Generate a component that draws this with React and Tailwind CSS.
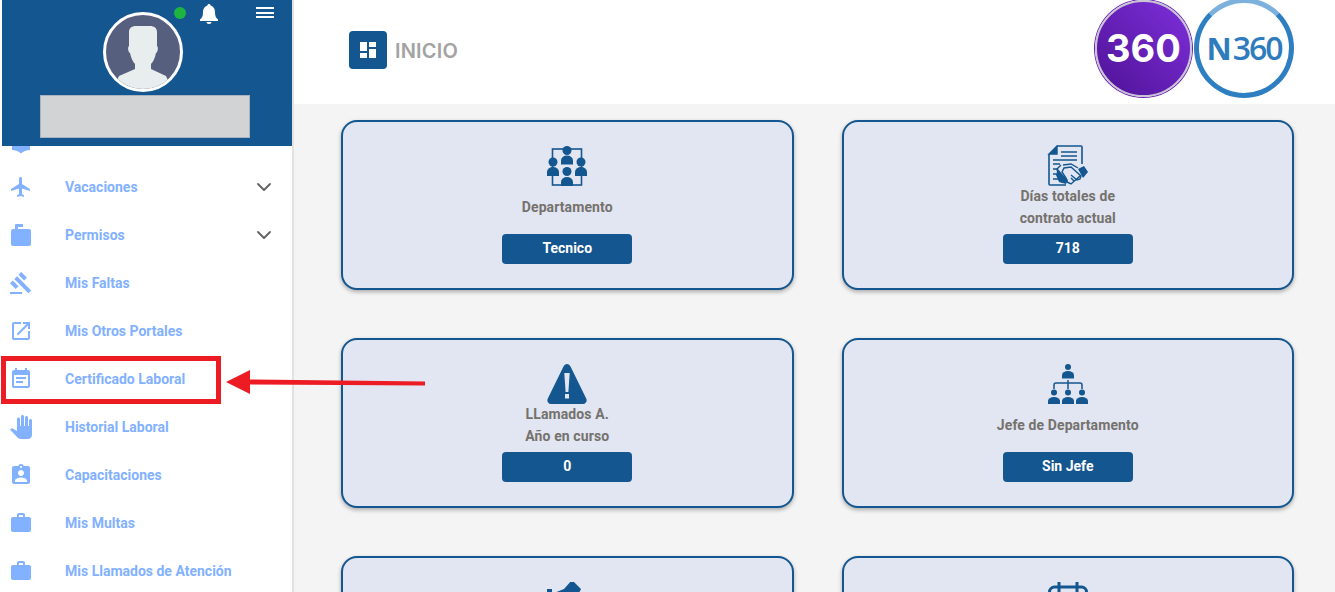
import { ChevronDown } from 'lucide-react';

const NAVY = '#14568f';

const MENU_PATHS = {
  library: 'M12 11.55C9.64 9.35 6.48 8 3 8v11c3.48 0 6.64 1.35 9 3.55 2.36-2.19 5.52-3.55 9-3.55V8c-3.48 0-6.64 1.35-9 3.55zM12 8c1.66 0 3-1.34 3-3s-1.34-3-3-3-3 1.34-3 3 1.34 3 3 3z',
  flight: 'M21 16v-2l-8-5V3.5c0-.83-.67-1.5-1.5-1.5S10 2.67 10 3.5V9l-8 5v2l8-2.5V19l-2 1.5V22l3.5-1 3.5 1v-1.5L13 19v-5.5l8 2.5z',
  permit: 'M20 6H9V4h5V1H7c-.6 0-1 .4-1 1v4H4c-1.100 0-2 .9-2 2v13c0 1.100.9 2 2 2h16c1.100 0 2-.9 2-2V8c0-1.100-.9-2-2-2z',
  gavel: 'M1 21h12v2H1zM5.245 8.07l2.83-2.827 14.14 14.142-2.828 2.828zM12.317 1l5.657 5.656-2.83 2.83-5.654-5.66zM3.825 9.485l5.657 5.657-2.828 2.828-5.657-5.657z',
  open: 'M19 19H5V5h7V3H5c-1.11 0-2 .9-2 2v14c0 1.1.89 2 2 2h14c1.1 0 2-.9 2-2v-7h-2v7zM14 3v2h3.59l-9.83 9.83 1.41 1.41L19 6.41V10h2V3h-7z',
  event: 'M17 10H7v2h10v-2zm2-7h-1V1h-2v2H8V1H6v2H5c-1.11 0-1.99.9-1.99 2L3 19c0 1.1.89 2 2 2h14c1.1 0 2-.9 2-2V5c0-1.1-.9-2-2-2zm0 16H5V8h14v11zm-5-5H7v2h7v-2z',
  hand: 'M23 5.5V20c0 2.2-1.8 4-4 4h-7.3c-1.08 0-2.1-.43-2.85-1.19L1 14.83s1.26-1.23 1.3-1.25c.22-.19.49-.29.79-.29.22 0 .42.06.6.16.04.01 4.31 2.46 4.31 2.46V4c0-.83.67-1.5 1.5-1.5S11 3.17 11 4v7h1V1.5c0-.83.67-1.5 1.5-1.5S15 .67 15 1.5V11h1V2.5c0-.83.67-1.5 1.5-1.5s1.5.67 1.5 1.5V11h1V5.5c0-.83.67-1.5 1.5-1.5s1.5.67 1.5 1.5z',
  badge: 'M19 3h-4.18C14.4 1.84 13.3 1 12 1c-1.3 0-2.4.84-2.82 2H5c-1.1 0-2 .9-2 2v14c0 1.1.9 2 2 2h14c1.1 0 2-.9 2-2V5c0-1.1-.9-2-2-2zm-7 0c.55 0 1 .45 1 1s-.45 1-1 1-1-.45-1-1 .45-1 1-1zm0 4c1.66 0 3 1.34 3 3s-1.34 3-3 3-3-1.34-3-3 1.34-3 3-3zm6 12H6v-1.4c0-2 4-3.1 6-3.1s6 1.1 6 3.1V19z',
  work: 'M20 6h-4V4c0-1.11-.89-2-2-2h-4c-1.11 0-2 .89-2 2v2H4c-1.11 0-1.99.89-1.99 2L2 19c0 1.11.89 2 2 2h16c1.11 0 2-.89 2-2V8c0-1.11-.89-2-2-2zm-6 0h-4V4h4v2z',
};

const MENU = [
  { icon: 'library', label: 'Mis Cursos', hidden: true },
  { icon: 'flight', label: 'Vacaciones', arrow: true },
  { icon: 'permit', label: 'Permisos', arrow: true },
  { icon: 'gavel', label: 'Mis Faltas' },
  { icon: 'open', label: 'Mis Otros Portales' },
  { icon: 'event', label: 'Certificado Laboral' },
  { icon: 'hand', label: 'Historial Laboral' },
  { icon: 'badge', label: 'Capacitaciones' },
  { icon: 'work', label: 'Mis Multas' },
  { icon: 'work', label: 'Mis Llamados de Atención' },
];

// head and shoulders, placed by the centre of the head
function Person({ x, y, r, top, h = 9 }) {
  return (
    <g>
      <circle cx={x} cy={y} r={r} />
      <path d={`M${x - 6} ${top + h}v-${h * 0.45}a6 ${h * 0.55} 0 0 1 12 0v${h * 0.45}z`} />
    </g>
  );
}

function TeamIcon() {
  return (
    <svg width="40" height="40" viewBox="0 0 40 40" fill={NAVY}>
      <rect x="5.5" y="3" width="29" height="36" fill="none" stroke={NAVY} strokeWidth="1.6" />
      <Person x={20} y={4.5} r={4.5} top={9.500} />
      <Person x={6} y={16} r={4.5} top={21} />
      <Person x={34} y={16} r={4.5} top={21} />
      <Person x={20} y={25.5} r={4.5} top={31} />
    </svg>
  );
}

function ContractIcon() {
  return (
    <svg width="42" height="42" viewBox="0 0 42 42" fill="none" stroke={NAVY} strokeWidth="1.4">
      <path d="M10 1h24a1 1 0 0 1 1 1v17M2 9v30a1 1 0 0 0 1 1h16" strokeWidth="1.6" />
      <path d="M10 1v8H2z" fill={NAVY} />
      <path d="M14 7h16M14 11h16M6 15h24M6 19h7M6 24h5M6 29h5M6 34h7" />
      <path d="M31 24l6-3 4 6-5 6z" fill={NAVY} stroke="none" />
      <path d="M14 20l-4 4 2 10c3 4 6 4 8 2l-1-3-4-6 2-4 7-1 10 9-1 3-3 1-6-5M20 37l4 2 9-8M24 33l3 3M16 20l8-1 7 4" />
      <path d="M11 24l-2 6 3 7 7 2 2-4-5-5z" fill={NAVY} stroke="none" />
    </svg>
  );
}

function WarningIcon() {
  return (
    <svg width="40" height="40" viewBox="0 0 40 40">
      <path d="M20 0c1.6 0 2.7 1 3.5 2.4l15.7 32c1.3 2.6-.3 5.6-3.2 5.6H4c-2.9 0-4.5-3-3.2-5.6l15.7-32C17.3 1 18.4 0 20 0z" fill={NAVY} />
      <path d="M17.3 9h5.4l-1.3 19h-2.8z" fill="#e1e6f2" />
      <rect x="18" y="30" width="4" height="4.5" fill="#e1e6f2" />
    </svg>
  );
}

function OrgIcon() {
  return (
    <svg width="40" height="40" viewBox="0 0 40 40" fill={NAVY}>
      <Person x={20} y={3} r={3} top={7} h={7.5} />
      <path d="M20 16v9M6 25v-4q0-2 2-2h24q2 0 2 2v4" fill="none" stroke={NAVY} strokeWidth="1.500" />
      <Person x={6} y={28.5} r={3} top={33} h={7} />
      <Person x={20} y={28.5} r={3} top={33} h={7} />
      <Person x={34} y={28.5} r={3} top={33} h={7} />
    </svg>
  );
}

function HandoverIcon() {
  return (
    <svg width="40" height="40" viewBox="0 0 40 40" fill={NAVY}>
      <path d="M25 -2l9 9-3 6-10 4-14 3v-9l10-4z" />
      <path d="M0 7h5v14H0z" />
    </svg>
  );
}

function CalendarIcon() {
  return (
    <svg width="40" height="40" viewBox="0 0 40 40" fill="none" stroke={NAVY} strokeWidth="3">
      <rect x="1.500" y="5" width="37" height="33" rx="5" />
      <path d="M11 0v10M29 0v10M2 12h36" />
    </svg>
  );
}

// the third row runs past the bottom of the window, only its icons show
const CARDS = [
  { id: 'dept', icon: <TeamIcon />, label: ['Departamento'], value: 'Tecnico' },
  { id: 'days', icon: <ContractIcon />, label: ['Días totales de', 'contrato actual'], value: '718' },
  { id: 'calls', icon: <WarningIcon />, label: ['LLamados A.', 'Año en curso'], value: '0' },
  { id: 'boss', icon: <OrgIcon />, label: ['Jefe de Departamento'], value: 'Sin Jefe' },
  { id: 'hand', icon: <HandoverIcon /> },
  { id: 'date', icon: <CalendarIcon /> },
];

function StatCard({ icon, label, value }) {
  return (
    <div className="flex h-[170px] flex-col items-center rounded-2xl border-2 border-[#14568f] bg-[#e1e6f2] pt-6 shadow-[0_2px_4px_rgba(0,0,0,0.3)]">
      <div className="flex h-10 items-center justify-center">{icon}</div>
      {label && (
        <div className="-mt-px flex h-11 flex-col justify-center text-center text-sm leading-[22px] font-bold tracking-[0.1px] text-[#75716d]">
          {label.map((line) => (
            <span key={line}>{line}</span>
          ))}
        </div>
      )}
      {value && (
        <div className="mt-[5px] flex h-[30px] w-[130px] items-center justify-center rounded bg-[#14568f] pb-[2px] text-sm font-bold text-white">
          {value}
        </div>
      )}
    </div>
  );
}

function Sidebar() {
  return (
    <aside className="h-full w-[294px] shrink-0 overflow-hidden border-r-2 border-[#e2e2e2] bg-white pl-[2px]">
      <header className="relative z-10 h-[146px] w-[291px] bg-[#14568f] pt-3 pl-[38px]">
        <div className="ml-[63px] h-20 w-20 overflow-hidden rounded-full border-[3px] border-white bg-[#56607e]">
          <svg viewBox="0 0 74 74" className="h-full w-full" fill="#e8eded">
            <path d="M23 17c0-4 3-6 7-6h14c4 0 7 2 7 6v14c1.500 1 1 6-1 7-1 5-3 9-5 11v5l15 7 6 13H7l6-13 16-7v-5c-2-2-4-6-5-11-2-1-2.500-6-1-7z" />
          </svg>
        </div>
        <div className="mt-[3px] h-[43px] w-[210px] border border-[#a9b4c0] bg-[#d1d3d4]" />
        <div className="absolute top-0 left-[172px] flex items-center">
          <span className="mt-[2px] h-3 w-3 rounded-full bg-[#1db53f]" />
          <svg width="18" height="20" viewBox="0 0 18 20" fill="white" className="mt-[4px] ml-[14px]">
            <path d="M9 0c1 0 1.600.7 1.600 1.600 3 .8 4.400 3.400 4.400 6.400 0 4 1 6 3 7.500V17H0v-1.500C2 14 3 12 3 8c0-3 1.400-5.600 4.400-6.400C7.400.7 8 0 9 0zM6.500 18h5c0 1.200-1 2-2.500 2s-2.500-.8-2.500-2z" />
          </svg>
          <div className="mt-[1px] ml-[38px] flex w-[18px] flex-col gap-[2.5px]">
            <span className="h-[2px] bg-white" />
            <span className="h-[2px] bg-white" />
            <span className="h-[2px] bg-white" />
          </div>
        </div>
      </header>
      <nav className="-mt-[31px]">
        {MENU.map((item) => (
          <div key={item.label} className="flex h-12 items-center pl-[7px] text-sm font-bold text-[#82b1ff]">
            <svg width="24" height="24" viewBox="0 0 24 24" fill="#82b1ff" className={item.hidden ? 'mt-[7px] shrink-0' : 'shrink-0'}>
              <path d={MENU_PATHS[item.icon]} />
            </svg>
            <span className="ml-8 flex-1">{item.label}</span>
            {item.arrow && <ChevronDown size={24} strokeWidth={1.8} className="mr-4 text-[#616161]" />}
          </div>
        ))}
      </nav>
    </aside>
  );
}

function Logos() {
  return (
    <div className="-mt-[2px] flex items-center pr-[41px]">
      <div className="flex h-[97px] w-[97px] items-center justify-center rounded-full border-2 border-[#c9c4d3] bg-[linear-gradient(45deg,#4f1296,#7d2fdb)] shadow-[0_0_0_1px_#6a22b8]">
        <span className="font-['Inter',sans-serif] text-[38px] font-bold text-white">360</span>
      </div>
      <div className="ml-[2px] flex h-[100px] w-[100px] items-center justify-center rounded-full border-[5px] border-[#2e7fc2] border-t-[#7cb0dd] bg-white font-['Open_Sans',sans-serif] text-[#2e7bbd]">
        <span className="text-[31px] font-bold">N</span>
        <span className="ml-[1px] text-[32px] font-semibold tracking-[-2px]">360</span>
      </div>
    </div>
  );
}

export default function App() {
  return (
    <div className="relative flex h-[592px] w-[1335px] overflow-hidden bg-white font-['Roboto',sans-serif]">
      <Sidebar />
      <main className="flex h-full min-w-0 flex-1 flex-col bg-[#f4f4f4]">
        <div className="flex h-[104px] shrink-0 items-start justify-between bg-white pl-[55px]">
          <div className="mt-[31px] flex items-center gap-2">
            <div className="flex h-[38px] w-[38px] items-center justify-center rounded bg-[#14568f]">
              <svg width="16" height="16" viewBox="0 0 16 16" fill="white">
                <path d="M0 0h7v9H0zM9 0h7v5H9zM9 7h7v9H9zM0 11h7v5H0z" />
              </svg>
            </div>
            <span className="pt-px font-['Inter',sans-serif] text-xl font-semibold tracking-[0.2px] text-[#a3a3a3]">INICIO</span>
          </div>
          <Logos />
        </div>
        <div className="grid grid-cols-2 gap-x-12 gap-y-12 pt-4 pr-[41px] pl-[47px]">
          {CARDS.map(({ id, ...card }) => (
            <StatCard key={id} {...card} />
          ))}
        </div>
      </main>

      {/* annotation drawn on top of the screenshot */}
      <div className="absolute top-[356px] left-px h-[48px] w-[220px] border-[5px] border-[#ed1c24]" />
      <svg width="202" height="26" viewBox="0 0 202 26" fill="#ed1c24" className="absolute top-[369px] left-[225px]">
        <path d="M1 13L25 1v9.500l175 2v4l-175-1V25z" />
      </svg>
    </div>
  );
}
